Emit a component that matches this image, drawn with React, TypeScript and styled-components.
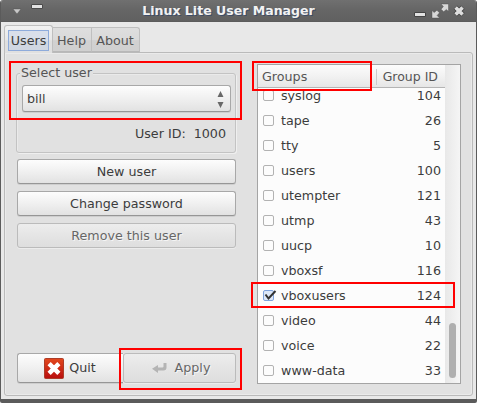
import React from "react";
import styled, { createGlobalStyle, css } from "styled-components";

const GlobalStyle = createGlobalStyle`
  * { box-sizing: border-box; }
  html, body { margin: 0; padding: 0; background: #fff; overflow: hidden; }
  body { font: 12.7px/16px "DejaVu Sans", sans-serif; color: #3c3c3c; }
`;

const Window = styled.div`
  position: relative;
  width: 477px;
  height: 403px;
  display: flex;
  flex-direction: column;
  border: solid #5b5b5b;
  border-width: 0 1px 4px;
  border-radius: 3px 3px 2px 2px;
  overflow: hidden;
  background: #e8e8e8;
`;

const TitleBar = styled.header`
  display: flex;
  flex: 0 0 22px;
  align-items: flex-start;
  justify-content: space-between;
  background: linear-gradient(#707070, #666 45%, #606060);
  border-bottom: 1px solid #5c5c5c;
`;

const Title = styled.h1`
  margin: 3px 0 0 -20px;
  font-size: 12.55px;
  line-height: 16px;
  font-weight: bold;
  color: #f2f2f2;
  white-space: nowrap;
  text-shadow: 1px 1px 0 #3d4c68;
`;

const TitleIcons = styled.svg`
  display: block;
  flex: none;
  width: 64px;
  height: 21px;
`;

const TabStrip = styled.nav`
  display: flex;
  align-items: flex-end;
  height: 30px;
  padding-left: 3px;
  position: relative;
  z-index: 1;
`;

const Tab = styled.div<{ $active?: boolean; $width: number }>`
  display: flex;
  align-items: center;
  justify-content: center;
  width: ${(p) => p.$width}px;
  height: 25px;
  color: #555;
  border: 1px solid #bfbfbf;
  border-left-width: 0;
  background: linear-gradient(#dedede, #dadada 50%, #d1d1d1 55%, #d0d0d0);
  border-bottom-color: #b8b8b8;
  padding: 2px 1px 0 0;
  &:last-child { border-top-right-radius: 3px; }
  ${(p) =>
    p.$active &&
    css`
      height: 28px;
      margin-bottom: -1px;
      padding: 3px 3px 2px;
      border-left-width: 1px;
      border-bottom: 0;
      border-radius: 3px 3px 0 0;
      background: linear-gradient(#f1f1f1, #e8e8e8 50%, #e0e0e0 55%);
      color: #3c3c3c;
    `}
`;

const TabFocus = styled.span`
  display: flex;
  align-items: center;
  justify-content: center;
  width: 41px;
  height: 21px;
  padding-top: 1px;
  border: 1px solid #8eabdb;
  background: linear-gradient(#d9dfea 50%, #d0d7e2 55%);
`;

const Page = styled.main`
  display: flex;
  justify-content: space-between;
  width: 469px;
  height: 344px;
  margin-left: 3px;
  padding: 11px 11px 11px 12px;
  border: 1px solid #bababa;
  border-radius: 0 3px 3px 3px;
  background: #e1e1e1;
  box-shadow: inset 1px 1px 0 #eaeaea, inset -1px -1px 0 #eaeaea;
`;

const Controls = styled.section`
  display: flex;
  flex-direction: column;
  width: 219px;
  height: 319px;
  padding-top: 9px;
`;

const UserBox = styled.fieldset`
  height: 80px;
  margin: 0 0 6px -1px;
  width: 220px;
  padding: 0;
  border: 1px solid #c3c3c3;
  border-radius: 3px;
  box-shadow: 1px 1px 0 #efefef, inset 1px 1px 0 #eaeaea;
  display: flex;
  flex-direction: column;
`;

const Legend = styled.span`
  align-self: flex-start;
  margin: -9px 0 0 3px;
  padding: 0 1px;
  height: 18px;
  line-height: 16px;
  color: #555;
  background: #e1e1e1;
`;

const raised = css`
  border: 1px solid #a8a8a8;
  border-bottom-color: #969696;
  border-radius: 3px;
  background: linear-gradient(#fdfdfd, #f0f0f0 50%, #e2e2e2);
  box-shadow: 0 1px 0 #cecece;
`;

const Select = styled.div`
  ${raised}
  display: flex;
  align-items: center;
  justify-content: space-between;
  width: 209px;
  height: 27px;
  margin: 2px 0 0 5px;
  padding: 0 6px 0 4px;
`;

const SelectArrows = styled.svg`
  display: block;
  width: 7px;
  height: 17px;
  margin-top: 2px;
`;

const UserId = styled.div`
  display: flex;
  justify-content: flex-end;
  gap: 8px;
  margin-top: 14px;
  padding-right: 9px;
`;

const Button = styled.button<{ $muted?: boolean }>`
  ${raised}
  display: flex;
  align-items: center;
  justify-content: center;
  width: 100%;
  height: 25px;
  padding: 0;
  font: inherit;
  color: #3c3c3c;
  ${(p) =>
    p.$muted &&
    css`
      color: #666;
      border-color: #bbb;
      box-shadow: 0 1px 0 #ececec;
      background: linear-gradient(#ededed, #e4e4e4 55%, #dedede);
      text-shadow: 1px 1px 0 #f5f5f5;
    `}
`;

const ButtonStack = styled.div`
  display: flex;
  flex-direction: column;
  gap: 7px;
`;

const Actions = styled.div`
  display: flex;
  margin-top: auto;
  & > button { height: 30px; }
  & > button:first-child { width: 106px; gap: 5px; border-radius: 3px 0 0 3px; padding-right: 1px; border-right: 0; }
  & > button:last-child { width: 113px; gap: 8px; padding-left: 3px; }
`;

const ActionIcon = styled.svg<{ $w: number; $h: number }>`
  width: ${(p) => p.$w}px;
  height: ${(p) => p.$h}px;
  flex: none;
`;

const GroupList = styled.section`
  display: flex;
  width: 204px;
  height: 320px;
  border: 1px solid #a4a4a4;
  background: #fcfcfc;
  overflow: hidden;
`;

const Table = styled.div`
  flex: none;
  width: 187px;
  overflow: hidden;
  display: flex;
  flex-direction: column;
`;

const TableHead = styled.div`
  display: flex;
  align-items: center;
  justify-content: space-between;
  flex: 0 0 23px;
  padding: 1px 7px 0 4px;
  color: #555;
  border-bottom: 1px solid #b4b4b4;
  background: linear-gradient(#fcfcfc, #f2f2f2 50%, #e6e6e6);
`;

const IdHead = styled.span`
  padding-left: 6px;
  font-size: 12.5px;
  border-left: 1px solid #ccc;
`;

const Rows = styled.div`
  flex: 1;
  min-height: 0;
  overflow: hidden;
  display: flex;
  flex-direction: column;
  justify-content: flex-end;
`;

const Row = styled.div`
  display: flex;
  align-items: center;
  flex: 0 0 25px;
  padding: 0 4px 0 5px;
`;

const GroupName = styled.span`
  flex: 1;
  padding-left: 7px;
`;

const Check = styled.span<{ $on?: boolean }>`
  display: block;
  width: 11px;
  height: 11px;
  border: 1px solid ${(p) => (p.$on ? "#7ea2dc" : "#b2b2b2")};
  border-radius: 2px;
  background: ${(p) => (p.$on ? "#dce7f8" : "#fcfcfc")};
  & > svg { display: block; margin: -1px 0 0; overflow: visible; }
`;

const ScrollTrack = styled.div`
  display: flex;
  align-items: flex-end;
  justify-content: center;
  flex: 1;
  padding: 0 0 5px;
  background: linear-gradient(90deg, #e8e8e8, #f5f5f5);
`;

const Thumb = styled.div`
  width: 7px;
  height: 55px;
  border-radius: 4px;
  background: #afafaf;
`;

const Highlight = styled.div<{ $x: number; $y: number; $w: number; $h: number }>`
  position: absolute;
  z-index: 2;
  left: ${(p) => p.$x - 1}px;
  top: ${(p) => p.$y}px;
  width: ${(p) => p.$w}px;
  height: ${(p) => p.$h}px;
  border: 2px solid #f00;
  pointer-events: none;
`;

const groups: Array<[string, number, boolean?]> = [
  ["syslog", 104],
  ["tape", 26],
  ["tty", 5],
  ["users", 100],
  ["utempter", 121],
  ["utmp", 43],
  ["uucp", 10],
  ["vboxsf", 116],
  ["vboxusers", 124, true],
  ["video", 44],
  ["voice", 22],
  ["www-data", 33],
];

export default function App() {
  return (
    <>
      <GlobalStyle />
      <Window>
        <TitleBar>
          <TitleIcons viewBox="0 0 64 21">
            <path d="M12 9h8l-4 5z" fill="#c8c8c8" stroke="#4c4c4c" strokeWidth=".4" />
            <path d="M30.5 4.5h11v4h-11z" fill="#e2e2e2" stroke="#4a4a4a" />
          </TitleIcons>
          <Title>Linux Lite User Manager</Title>
          <TitleIcons viewBox="411 0 64 21">
            <path d="M413.5 12.5h11v4h-11z" fill="#e2e2e2" stroke="#444" />
            <path d="M440 4h7.5v7.5l-2.2-2.1-2.6 2.4-2.6-2.6 2.3-2.7zM431 18v-7.5l2.2 2.1 2.7-2.4 2.6 2.6-2.4 2.7 2.5 2.5z" fill="#d8d8d8" stroke="#464646" strokeWidth=".4" />
            <path d="M454.3 7.2l7.6 7.6m0-7.6l-7.6 7.6" stroke="#414141" strokeWidth="5" />
            <path d="M454.6 7.5l7 7m0-7l-7 7" stroke="#dedede" strokeWidth="3.6" />
          </TitleIcons>
        </TitleBar>
        <TabStrip>
          <Tab $active $width={49}><TabFocus>Users</TabFocus></Tab>
          <Tab $width={39}>Help</Tab>
          <Tab $width={48}>About</Tab>
        </TabStrip>
        <Page>
          <Controls>
            <UserBox>
              <Legend>Select user</Legend>
              <Select>
                bill
                <SelectArrows viewBox="0 0 7 17">
                  <path d="M.5 6L3.5 0l3 6zM.5 11h6l-3 6z" fill="#686868" />
                </SelectArrows>
              </Select>
              <UserId><span>User ID:</span><span>1000</span></UserId>
            </UserBox>
            <ButtonStack>
              <Button>New user</Button>
              <Button>Change password</Button>
              <Button $muted>Remove this user</Button>
            </ButtonStack>
            <Actions>
              <Button>
                <ActionIcon $w={20} $h={21} viewBox="0 0 20 21">
                  <defs>
                    <linearGradient id="quit" x2="0" y2="1">
                      <stop stopColor="#e2481e" />
                      <stop offset="1" stopColor="#b80e0e" />
                    </linearGradient>
                  </defs>
                  <rect x=".5" y=".5" width="19" height="20" rx="1" fill="url(#quit)" stroke="#ac3c28" />
                  <path d="M5.1 5.6l9.8 9.8m0-9.8l-9.8 9.8" stroke="#fff" strokeWidth="4.5" />
                </ActionIcon>
                Quit
              </Button>
              <Button $muted>
                <ActionIcon $w={15} $h={12} viewBox="0 0 15 12">
                  <path d="M14.5 1v4.500q0 3-3 3H6V11L0 6.8 6 3v2.500h4.500q1 0 1-1V1z" fill="#b4b4b4" />
                </ActionIcon>
                Apply
              </Button>
            </Actions>
          </Controls>
          <GroupList>
            <Table>
              <TableHead><span>Groups</span><IdHead>Group ID</IdHead></TableHead>
              <Rows>
                {groups.map(([name, id, on]) => (
                  <Row key={name}>
                    <Check $on={on}>
                      {on && (
                        <svg width="11" height="10" viewBox="0 0 11 10">
                          <path d="M1.5 4.5l3 4L11.5 1" fill="none" stroke="#333" strokeWidth="2" />
                        </svg>
                      )}
                    </Check>
                    <GroupName>{name}</GroupName>
                    <span>{id}</span>
                  </Row>
                ))}
              </Rows>
            </Table>
            <ScrollTrack><Thumb /></ScrollTrack>
          </GroupList>
        </Page>
        <Highlight $x={9} $y={61} $w={233} $h={59} />
        <Highlight $x={252} $y={61} $w={120} $h={30} />
        <Highlight $x={251} $y={282} $w={204} $h={26} />
        <Highlight $x={119} $y={348} $w={123} $h={42} />
      </Window>
    </>
  );
}
